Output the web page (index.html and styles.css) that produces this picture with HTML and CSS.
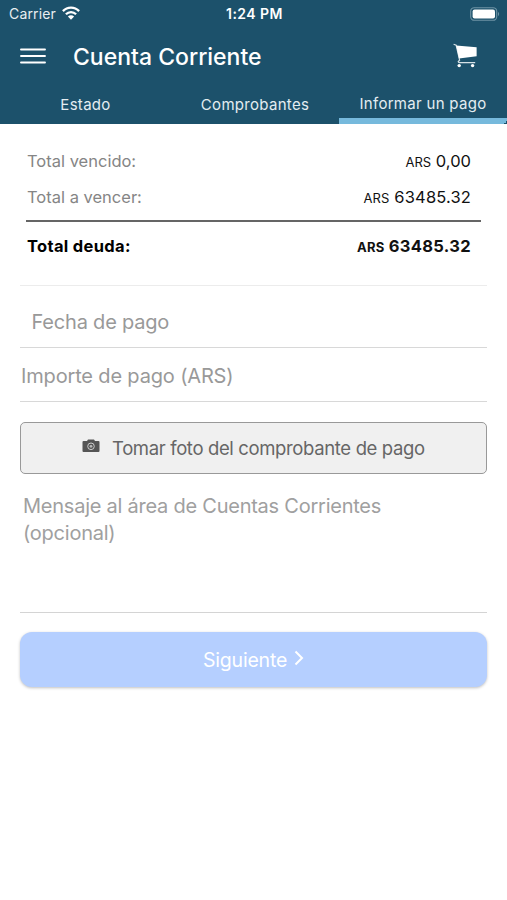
FILE: index.html
```html
<!DOCTYPE html>
<html lang="es">
<head>
<meta charset="utf-8">
<meta name="viewport" content="width=device-width, initial-scale=1">
<title>Cuenta Corriente</title>
<link rel="stylesheet" href="styles.css">
</head>
<body>
<header class="header">
  <div class="status">
    <div class="carrier"><span>Carrier</span>
      <svg class="wifi" viewBox="0 0 18 14" width="18" height="14" fill="none" stroke="#fff" stroke-width="2.3"><path d="M.9 5.1C5.4.4 12.6.4 17.1 5.1"/><path d="M3.9 8.2c2.9-2.9 7.3-2.9 10.2 0"/><path d="M9 13.8 5.9 10.6c1.7-1.7 4.5-1.7 6.2 0z" fill="#fff" stroke="none"/></svg>
    </div>
    <time class="clock">1:24 PM</time>
    <svg class="battery" viewBox="0 0 30 14" width="30" height="14"><rect x=".7" y=".7" width="26" height="12.6" rx="3.6" fill="none" stroke="#6e93a5" stroke-width="1.1"/><rect x="2.6" y="2.4" width="22.4" height="9.2" rx="2" fill="#fff"/><path d="M28 5c1.5.6 1.5 3.4 0 4z" fill="#6e93a5"/></svg>
  </div>
  <div class="bar">
    <svg class="menu" viewBox="0 0 26 16" width="26" height="16" stroke="#fff" stroke-width="1.9" stroke-linecap="round"><path d="M1 1.5h24M1 8h24M1 14.5h24"/></svg>
    <h1 class="title">Cuenta Corriente</h1>
    <svg class="cart" viewBox="0 0 24 25" width="24" height="25"><path d="M.6 1.2 3.2 2.3 6.6 17.2 5.2 18.6q0 1 1.3 1H22.2" fill="none" stroke="#d5e1e6" stroke-width="1.2"/><path d="M3.2 2.5 23.6 4.3V13.2L6 15.6z" fill="#fff"/><circle cx="6.2" cy="22.6" r="1.7" fill="#fff"/><circle cx="19.6" cy="22.6" r="1.7" fill="#fff"/></svg>
  </div>
  <nav class="tabs">
    <a class="tab">Estado</a>
    <a class="tab">Comprobantes</a>
    <a class="tab active">Informar un pago</a>
  </nav>
</header>
<main class="content">
  <section class="summary">
    <div class="row"><span class="label">Total vencido:</span><span class="amount"><small>ARS</small> 0,00</span></div>
    <div class="row"><span class="label">Total a vencer:</span><span class="amount long"><small>ARS</small> 63485.32</span></div>
    <div class="row total"><span class="label">Total deuda:</span><span class="amount"><small>ARS</small> 63485.32</span></div>
  </section>
  <div class="field date"><span>Fecha de pago</span></div>
  <div class="field sum"><span>Importe de pago (ARS)</span></div>
  <div class="photo">
    <svg class="camera" viewBox="0 0 18 14" width="18" height="14"><path d="M1.5 2H5l1-1.5h6L13 2h3.5q1 0 1 1v9q0 1-1 1h-15q-1 0-1-1V3q0-1 1-1z" fill="#555"/><circle cx="9" cy="7.3" r="3.3" fill="none" stroke="#ccc" stroke-width="1"/><circle cx="9" cy="7.3" r="1.4" fill="#bbb"/></svg>
    <span>Tomar foto del comprobante de pago</span>
  </div>
  <div class="message"><span>Mensaje al área de Cuentas Corrientes</span><br><span>(opcional)</span></div>
  <div class="next"><span>Siguiente</span>
    <svg class="chevron" viewBox="0 0 10 16" width="10" height="16" fill="none" stroke="#fff" stroke-width="2"><path d="m1.5 1.5 6.5 6.5-6.5 6.5"/></svg>
  </div>
</main>
</body>
</html>
```
FILE: styles.css
```css
* { box-sizing: border-box; }
body { margin: 0; min-height: 900px; background: #fff; font-family: Inter, "Liberation Sans", sans-serif; color: #111; }
svg { display: block; flex: none; }
span, time { white-space: nowrap; }
.header { height: 124px; background: #1c516b; color: #fff; display: flex; flex-direction: column; }
.status { height: 28px; display: grid; grid-template-columns: 1fr auto 1fr; align-items: center; padding: 0 7px 0 9px; font-size: 14px; line-height: 28px; }
.carrier { display: flex; align-items: center; gap: 6px; color: #e8eef1; letter-spacing: .15px; }
.wifi { margin-top: -2px; }
.clock { font-weight: 600; font-size: 14px; letter-spacing: .45px; }
.battery { justify-self: end; margin-top: -1px; }
.bar { height: 56px; display: flex; align-items: center; padding: 0 30px 0 20px; }
.menu { margin-top: -1px; }
.cart { margin-top: -1px; }
.title { margin: 2px 0 0 27px; font-size: 23px; font-weight: 500; line-height: 30px; flex: 1; }
.tabs { height: 40px; display: grid; grid-template-columns: 170px 169px 168px; }
.tab { height: 40px; font-size: 15px; line-height: 41px; letter-spacing: .3px; text-align: center; color: #e4edf1; padding-left: 1px; }
.active { line-height: 39px; padding-left: 0; background: linear-gradient(135deg, #76b9dc 50%, #1c516b 50%) right bottom / 3px 3px no-repeat, linear-gradient(#76b9dc, #76b9dc) left bottom / 100% 6px no-repeat; }
.content { padding: 20px 20px 0; }
.summary { height: 142px; padding: 0 6px; border-bottom: 1px solid #ececec; }
.row { height: 36px; line-height: 35px; padding: 0 10px 0 1px; display: flex; justify-content: space-between; font-size: 16.5px; }
.label { color: #858585; }
.amount small { font-size: 13px; }
.long { letter-spacing: .15px; }
.total { height: 51px; margin-top: 4px; border-top: 2px solid #656565; line-height: 49px; font-weight: 700; letter-spacing: .32px; }
.total .label { color: #000; }
.field { border-bottom: 1px solid #d8d8d8; color: #999; font-size: 20px; }
.date { height: 62px; line-height: 72px; padding-left: 11.5px; letter-spacing: -.2px; }
.sum { height: 54px; line-height: 56px; padding-left: 1px; letter-spacing: -.16px; }
.photo { height: 52px; margin-top: 20px; padding-left: 61px; display: flex; align-items: center; border: 1px solid #999; border-radius: 5px; background: #f0f0f0; color: #666; font-size: 18.5px; letter-spacing: -.36px; }
.camera { margin: -5px 12px 0 0; }
.message { height: 139px; padding: 19px 3px 0; border-bottom: 1px solid #d4d4d4; color: #a0a0a0; font-size: 20px; line-height: 27px; letter-spacing: -.24px; }
.next { height: 55px; margin-top: 19px; border-radius: 12px; background: #b5cfff; box-shadow: 0 1px 3px rgba(0,0,0,.25); display: flex; align-items: center; justify-content: center; gap: 7px; color: #fff; font-size: 19.5px; letter-spacing: -.2px; }
.chevron { margin-top: -3px; }
```
